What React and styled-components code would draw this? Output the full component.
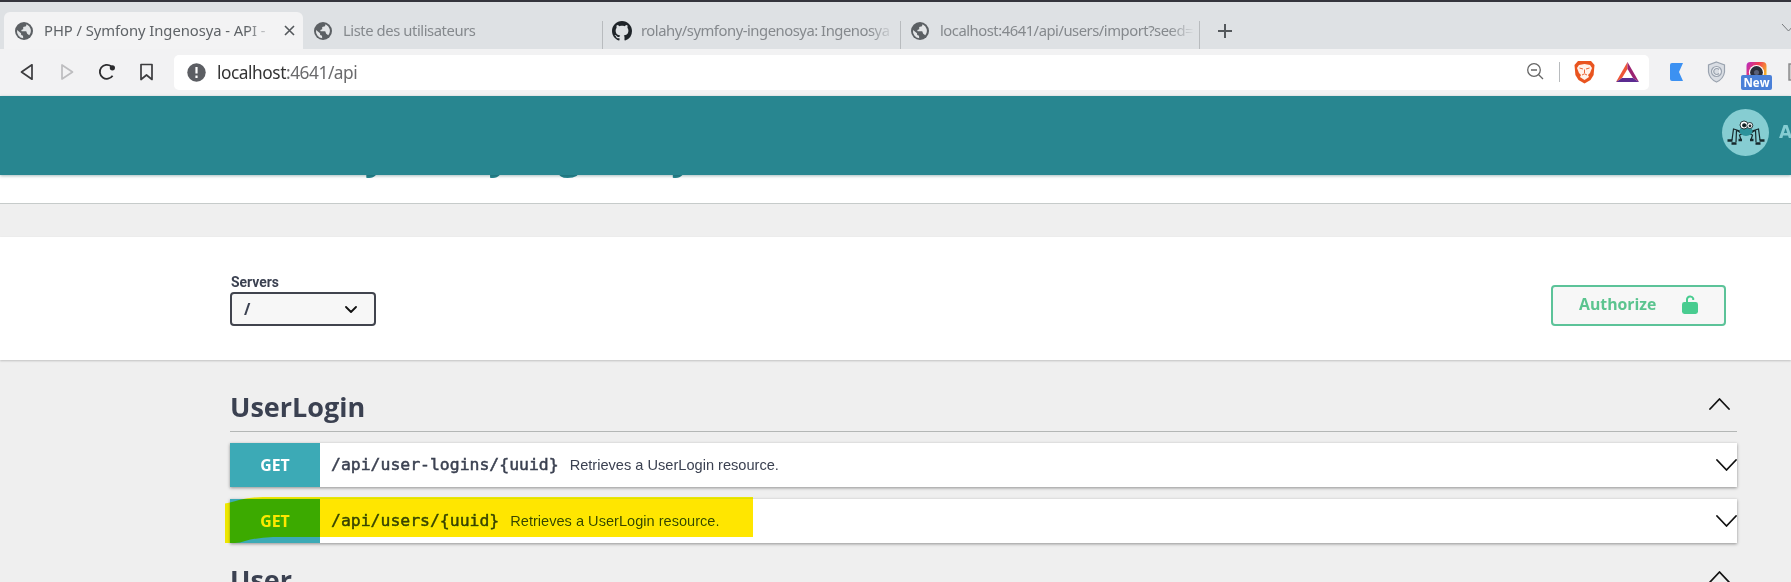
import React from "react";
import styled, { createGlobalStyle } from "styled-components";

const Global = createGlobalStyle`
  * { box-sizing: border-box; }
  html, body { margin: 0; height: 582px; overflow: hidden; background: #efefef; }
  body { font-family: "Open Sans", "Noto Sans", sans-serif; color: #3b4151; }
`;

const Page = styled.div`
  width: 1791px;
  height: 582px;
  overflow: hidden;
  display: flex;
  flex-direction: column;
`;

const TabStrip = styled.div`
  height: 49px;
  flex: none;
  border-top: 2px solid #34343c;
  background: #dee1e4;
  display: flex;
  align-items: flex-end;
  padding-left: 4px;
`;

const Tab = styled.div`
  width: ${(p) => p.$w}px;
  height: 37px;
  display: flex;
  align-items: center;
  gap: ${(p) => p.$gap || 11}px;
  padding: 0 ${(p) => p.$right || 8}px 0 ${(p) => p.$left || 11}px;
  border-radius: 6px 6px 0 0;
  background: ${(p) => (p.$active ? "#f3f3f4" : "transparent")};
`;

const TabTitle = styled.div`
  flex: 1;
  min-width: 0;
  overflow: hidden;
  white-space: nowrap;
  font-family: "Noto Sans", sans-serif;
  font-size: 14.8px;
  line-height: 22px;
  padding-bottom: 1px;
  letter-spacing: ${(p) => p.$ls || 0}px;
  color: ${(p) => (p.$active ? "#5f6367" : "#85898d")};
  mask-image: ${(p) => (p.$fade ? "linear-gradient(to right, #000 calc(100% - 26px), transparent)" : "none")};
`;

const Divider = styled.div`
  width: 1px;
  height: ${(p) => p.$h}px;
  background: #b8bbbe;
`;

const NewTab = styled.div`
  height: 37px;
  display: flex;
  align-items: center;
  padding-left: 17px;
`;

const StripEnd = styled.div`
  margin-left: auto;
  height: 37px;
  padding-top: 3px;
`;

const Toolbar = styled.div`
  height: 47px;
  flex: none;
  background: #f2f2f3;
  display: flex;
  align-items: center;
  padding: 0 0 1px 18px;
`;

const NavButtons = styled.div`
  width: 156px;
  flex: none;
  display: flex;
  gap: 22px;
`;

const AddressBar = styled.div`
  width: 1475px;
  flex: none;
  height: 35px;
  border-radius: 5px;
  background: #fff;
  display: flex;
  align-items: center;
  padding: 0 9px 0 13px;
`;

const Url = styled.div`
  margin-left: 11px;
  padding-top: 1px;
  flex: 1;
  font-family: "Noto Sans", sans-serif;
  font-size: 17.3px;
  line-height: 24px;
  letter-spacing: -0.45px;
  color: #6a6a6c;
  span { color: #333; }
`;

const BarIcons = styled.div`
  display: flex;
  align-items: center;
`;

const Extensions = styled.div`
  display: flex;
  flex: none;
  align-items: center;
  gap: 20px;
  padding-left: 19px;
`;

const Camera = styled.div`
  position: relative;
  width: 31px;
  height: 28px;
  margin: 8px -4px 0 -5px;
  display: flex;
  justify-content: center;
`;

const NewBadge = styled.div`
  position: absolute;
  left: 0;
  top: 13px;
  width: 31px;
  height: 15px;
  border-radius: 2px;
  background: #4a80d8;
  color: #fff;
  font-size: 11.5px;
  font-weight: 700;
  line-height: 15px;
  text-align: center;
`;

const Header = styled.header`
  position: relative;
  z-index: 1;
  height: 79px;
  flex: none;
  background: #288690;
  box-shadow: 0 1px 3px rgba(0, 60, 65, 0.35);
  display: flex;
  justify-content: flex-end;
  padding-top: 13px;
`;

const Avatar = styled.div`
  width: 47px;
  height: 47px;
  border-radius: 50%;
  background: #86cdd2;
  display: flex;
  align-items: center;
  justify-content: center;
`;

const Brand = styled.div`
  width: 12px;
  margin-left: 10px;
  overflow: hidden;
  font-family: "DejaVu Sans", sans-serif;
  font-weight: 700;
  font-size: 17px;
  line-height: 47px;
  color: #86cdd2;
`;

const Info = styled.section`
  height: 29px;
  flex: none;
  background: #fff;
  border-bottom: 1px solid #c6cbca;
  display: flex;
  align-items: flex-end;
  padding: 0 0 28px 230px;
`;

const Title = styled.h2`
  margin: 0;
  flex: none;
  font-size: 38.5px;
  line-height: 42px;
  color: #288690;
  white-space: nowrap;
`;

const Scheme = styled.section`
  height: 123px;
  flex: none;
  margin-top: 33px;
  background: #fff;
  box-shadow: 0 1px 2px rgba(0, 0, 0, 0.2);
  display: flex;
  justify-content: space-between;
  align-items: flex-end;
  padding: 0 65px 34px 230px;
`;

const ServerLabel = styled.div`
  font-family: Roboto, sans-serif;
  font-weight: 700;
  font-size: 13.9px;
  line-height: 18px;
  padding: 0 0 1px 1px;
`;

const Select = styled.div`
  width: 146px;
  height: 34px;
  border: 2px solid #41444e;
  border-radius: 4px;
  background: #f7f7f7;
  display: flex;
  align-items: center;
  justify-content: space-between;
  padding: 0 17px 0 12px;
  font-size: 15.4px;
  font-weight: 700;
  svg { margin-top: 1px; }
`;

const Authorize = styled.div`
  width: 175px;
  height: 41px;
  border: 2px solid #5cc399;
  border-radius: 4px;
  background: #f7f7f7;
  display: flex;
  align-items: center;
  justify-content: space-between;
  padding: 0 26px 3px;
  color: #5bc48f;
  font-size: 15.8px;
  font-weight: 700;
`;

const Operations = styled.main`
  width: 1507px;
  margin: 27px 0 0 230px;
  display: flex;
  flex-direction: column;
  gap: 12px;
`;

const TagHeader = styled.div`
  height: 45px;
  border-bottom: 1px solid #b4b7b6;
  display: flex;
  align-items: flex-start;
  justify-content: space-between;
  padding: 0 7px 0 0;
  margin: ${(p) => p.$top || 0}px 0 -1px;
  h3 { margin: 2px 0 0; font-size: 27px; line-height: 36px; }
  svg { margin-top: 11px; }
`;

const Operation = styled.div`
  position: relative;
  height: 44px;
  background: #fff;
  box-shadow: 0 1px 3px rgba(0, 0, 0, 0.4);
  display: flex;
  align-items: center;
`;

const Method = styled.div`
  width: 90px;
  height: 44px;
  background: #3caab6;
  color: #fff;
  font-weight: 700;
  font-size: 15.8px;
  line-height: 44px;
  text-align: center;
`;

const Path = styled.div`
  margin-left: 11px;
  font-family: "DejaVu Sans Mono", monospace;
  font-size: 16.45px;
  line-height: 24px;
  -webkit-text-stroke: 0.5px currentColor;
`;

const Description = styled.div`
  flex: 1;
  margin-left: 11px;
  font-family: "Liberation Sans", sans-serif;
  font-size: 14.6px;
  line-height: 20px;
`;

const Marker = styled.svg`
  position: absolute;
  left: -5px;
  top: -2px;
  mix-blend-mode: darken;
`;

const Globe = () => (
  <svg width="18" height="18" viewBox="0 0 18 18">
    <circle cx="9" cy="9" r="9" fill="#5c6064" />
    <path d="M2 8 L6 11.2 L6.2 13 L8 13.8 L8.2 16.2 A7.3 7.3 0 0 1 2 8Z" fill="#e3e5e7" />
    <path d="M11.5 2.2 L11 4.2 L8.2 5 L8.2 7.2 L6.3 8 L6.6 9.2 L11.2 9.3 L12.2 11.8 L14.3 13.3 A7.2 7.2 0 0 0 11.5 2.2Z" fill="#e3e5e7" />
  </svg>
);

const GitHub = () => (
  <svg width="20" height="20" viewBox="0 0 16 16" fill="#1f2429">
    <path d="M8 0C3.58 0 0 3.58 0 8c0 3.54 2.29 6.53 5.47 7.59.4.07.55-.17.55-.38 0-.19-.01-.82-.01-1.49-2.01.37-2.53-.49-2.69-.94-.09-.23-.48-.94-.82-1.13-.28-.15-.68-.52-.01-.53.63-.01 1.08.58 1.23.82.72 1.21 1.87.87 2.33.66.07-.52.28-.87.51-1.07-1.78-.2-3.64-.89-3.64-3.95 0-.87.31-1.59.82-2.15-.08-.2-.36-1.02.08-2.12 0 0 .67-.21 2.2.82.64-.18 1.32-.27 2-.27s1.36.09 2 .27c1.53-1.04 2.2-.82 2.2-.82.44 1.1.16 1.92.08 2.12.51.56.82 1.27.82 2.15 0 3.07-1.87 3.75-3.65 3.95.29.25.54.73.54 1.48 0 1.07-.01 1.93-.01 2.2 0 .21.15.46.55.38A8.01 8.01 0 0 0 16 8c0-4.42-3.58-8-8-8z" />
  </svg>
);

const Chevron = ({ up, w = 20, h = 11, s = 1.8 }) => (
  <svg width={w} height={h} viewBox={`0 0 ${w} ${h}`} fill="none" stroke="#111" strokeWidth={s} strokeLinecap="round" strokeLinejoin="round">
    <path d={up ? `M1 ${h - 1}L${w / 2} 1L${w - 1} ${h - 1}` : `M1 1L${w / 2} ${h - 1}L${w - 1} 1`} />
  </svg>
);

const Spider = () => (
  <svg width="40" height="26" viewBox="0 0 40 26" fill="none" stroke="#17292c" strokeWidth="1.2">
    <path d="M14 11L7.5 9L6 20M15 13L10.5 10L10 22M16 14L13.5 15L15 20M26 11L32.5 9L34 20M25 13L29.5 10L30 22M24 14L26.5 15L25 20" />
    <path d="M1.5 20.5H6.5M5.5 23.5H10.5M12.5 20H16M24 20H27.5M29.5 23.5H34.5M33.5 20.5H38.5" strokeWidth="2.4" />
    <ellipse cx="20" cy="11" rx="6.5" ry="5" fill="#2c929b" stroke="none" />
    <circle cx="18" cy="5" r="4" fill="#fff" strokeWidth=".9" />
    <circle cx="23.8" cy="5.5" r="3" fill="#fff" strokeWidth=".9" />
    <circle cx="18.2" cy="5.3" r="1.5" fill="#111" />
    <circle cx="24" cy="5.8" r=".8" fill="#111" />
  </svg>
);

const BrowserTabs = () => (
  <TabStrip>
    <Tab $active $w={299}>
      <Globe />
      <TabTitle $active $fade $ls={-0.06}>PHP / Symfony Ingenosya - API -</TabTitle>
      <svg width="11" height="11" viewBox="0 0 11 11" stroke="#54585c" strokeWidth="1.6"><path d="M1 1L10 10M10 1L1 10" /></svg>
    </Tab>
    <Tab $w={299}>
      <Globe />
      <TabTitle $ls={-0.43}>Liste des utilisateurs</TabTitle>
    </Tab>
    <Divider $h={28} />
    <Tab $w={297} $left={9} $gap={9} $right={5}>
      <GitHub />
      <TabTitle $fade $ls={-0.47}>rolahy/symfony-ingenosya: Ingenosya</TabTitle>
    </Tab>
    <Divider $h={28} />
    <Tab $w={298} $left={10} $right={4}>
      <Globe />
      <TabTitle $fade $ls={-0.48}>localhost:4641/api/users/import?seed=</TabTitle>
    </Tab>
    <Divider $h={28} />
    <NewTab>
      <svg width="16" height="16" viewBox="0 0 16 16" stroke="#54585c" strokeWidth="2"><path d="M8 1V15M1 8H15" /></svg>
    </NewTab>
    <StripEnd>
      <svg width="10" height="9" viewBox="0 0 10 9" fill="none" stroke="#777a7d"><path d="M1 1L7.5 8L14 1" /></svg>
    </StripEnd>
  </TabStrip>
);

const BrowserToolbar = () => (
  <Toolbar>
    <NavButtons>
      <svg width="18" height="18" viewBox="0 0 18 18" fill="none" stroke="#3c3c3e" strokeWidth="1.7" strokeLinejoin="round"><path d="M14 1.8V16.2L3.5 9Z" /></svg>
      <svg width="18" height="18" viewBox="0 0 18 18" fill="none" stroke="#bdbdbf" strokeWidth="1.7" strokeLinejoin="round"><path d="M4 2V16L14.5 9Z" /></svg>
      <svg width="18" height="18" viewBox="0 0 18 18" fill="none" stroke="#2c2c2e" strokeWidth="1.8"><path d="M13.2 3.3A7 7 0 1 0 14.6 12.8" /><circle cx="14.4" cy="4.8" r="2.6" fill="#2c2c2e" stroke="none" /></svg>
      <svg width="18" height="18" viewBox="0 0 18 18" fill="none" stroke="#3c3c3e" strokeWidth="1.7" strokeLinejoin="round"><path d="M3 1.5H14V16.5L8.5 12L3 16.5Z" /></svg>
    </NavButtons>
    <AddressBar>
      <svg width="19" height="19" viewBox="0 0 19 19"><circle cx="9.5" cy="9.5" r="9.2" fill="#5c5e63" /><path d="M9.5 4V10.5M9.5 12.6V15" stroke="#fff" strokeWidth="2.2" /></svg>
      <Url><span>localhost</span>:4641/api</Url>
      <BarIcons>
        <svg width="33" height="20" viewBox="0 0 33 20" fill="none" stroke="#666" strokeWidth="1.3"><circle cx="8" cy="8" r="6.3" /><path d="M5 8H11M12.7 12.7L17 17" /></svg>
        <Divider $h={20} />
        <svg width="42" height="24" viewBox="0 0 42 24">
          <path d="M18 1H31L34.5 5L33.6 15L30.5 20L24.5 23.5L18.5 20L15.4 15L14.5 5Z" fill="#e9541f" />
          <path d="M19 5L24.5 4L30 5L32 8L30 13L28 15L29 17L24.5 20L20 17L21 15L19 13L17 8Z" fill="#fff2ea" />
          <path d="M19.5 8L23 9M29.5 8L26 9M22 15L24.5 13.8L27 15M24.5 9.5V13" stroke="#e9541f" strokeWidth="0.9" fill="none" />
        </svg>
        <svg width="38" height="22" viewBox="0 0 38 22">
          <path d="M25.5 1L14 21L20 17L25.5 8Z" fill="#ee5537" />
          <path d="M25.5 1L37 21L31 17L25.5 8Z" fill="#9b2372" />
          <path d="M14 21L20 17H31L37 21Z" fill="#5b2b91" />
        </svg>
      </BarIcons>
    </AddressBar>
    <Extensions>
      <svg width="19" height="18" viewBox="0 0 19 18"><path d="M2 2Q2 0 4 0H15L11 9L15 18H4Q2 18 2 16Z" fill="#3c91f2" /></svg>
      <svg width="19" height="22" viewBox="0 0 19 22" fill="#d9dde3" stroke="#9aa3af" strokeWidth="1.2"><path d="M9.5 1L17.5 4V11Q16.5 18 9.5 21Q2.5 18 1.5 11V4Z" /><circle cx="9.5" cy="10.5" r="5" fill="#eef0f3" /><path d="M12 8.5A3 3 0 1 0 12 12.5" /></svg>
      <Camera>
        <svg width="21" height="20" viewBox="0 0 20 20">
          <defs><linearGradient id="cam" x1="0" x2="1" y1="0" y2="0.5"><stop offset="0" stopColor="#b52ac4" /><stop offset=".5" stopColor="#f23b57" /><stop offset="1" stopColor="#f5b025" /></linearGradient></defs>
          <rect width="20" height="20" rx="4" fill="url(#cam)" />
          <circle cx="10" cy="10.5" r="7.6" fill="#fff" /><circle cx="10" cy="10.5" r="6.4" fill="#2b2e3a" /><circle cx="10" cy="10.5" r="2.5" fill="#59617a" />
        </svg>
        <NewBadge>New</NewBadge>
      </Camera>
      <svg width="4" height="18" viewBox="0 0 4 18"><rect x="1" y="1" width="14" height="16" fill="#ccc" stroke="#888" strokeWidth="1.4" /></svg>
    </Extensions>
  </Toolbar>
);

const Tag = ({ name, top }) => (
  <TagHeader $top={top}>
    <h3>{name}</h3>
    <Chevron up w={21} h={12} />
  </TagHeader>
);

const Endpoint = ({ path, marked }) => (
  <Operation>
    <Method>GET</Method>
    <Path>{path}</Path>
    <Description>Retrieves a UserLogin resource.</Description>
    <Chevron w={21} h={12} />
    {marked && (
      <Marker width="528" height="46" viewBox="0 0 528 46">
        <path d="M0 6.5Q5 5.5 14 3Q25 0 38 0H528V40H48Q32 40.5 20 44Q15 46 10 46H0Z" fill="#ffe600" />
      </Marker>
    )}
  </Operation>
);

export default function App() {
  return (
    <Page>
      <Global />
      <BrowserTabs />
      <BrowserToolbar />
      <Header>
        <Avatar><Spider /></Avatar>
        <Brand>A</Brand>
      </Header>
      <Info><Title>PHP / Symfony Ingenosya</Title></Info>
      <Scheme>
        <div>
          <ServerLabel>Servers</ServerLabel>
          <Select>/<Chevron w={12} h={7} s={1.8} /></Select>
        </div>
        <Authorize>
          Authorize
          <svg width="16" height="20" viewBox="0 0 16 20"><path d="M5 9V5A3.3 3.3 0 0 1 11.2 4.4V6" fill="none" stroke="#49cc90" strokeWidth="2" /><rect y="8" width="16" height="12" rx="2.4" fill="#49cc90" /></svg>
        </Authorize>
      </Scheme>
      <Operations>
        <Tag name="UserLogin" />
        <Endpoint path="/api/user-logins/{uuid}" />
        <Endpoint path="/api/users/{uuid}" marked />
        <Tag name="User" top={5} />
      </Operations>
    </Page>
  );
}
